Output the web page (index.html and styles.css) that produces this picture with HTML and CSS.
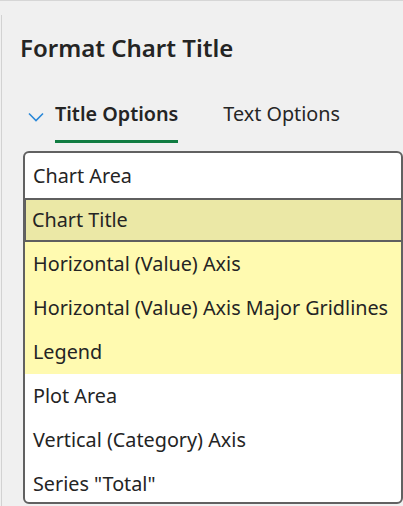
FILE: index.html
```html
<!DOCTYPE html>
<html>
<head>
<meta charset="utf-8">
<link rel="stylesheet" href="styles.css">
</head>
<body>
<div class="frame">
  <div class="pane">
    <h1 class="title">Format Chart Title</h1>
    <div class="tabs">
      <svg class="chev" width="16" height="10" viewBox="0 0 16 10"><polyline points="1,1.5 8,8.5 15,1.5" fill="none" stroke="#2b88d8" stroke-width="1.6"/></svg>
      <div class="tab active">Title Options</div>
      <div class="tab">Text Options</div>
    </div>
    <div class="dropdown">
      <div class="row">Chart Area</div>
      <div class="row selected">Chart Title</div>
      <div class="row hl">Horizontal (Value) Axis</div>
      <div class="row hl">Horizontal (Value) Axis Major Gridlines</div>
      <div class="row hl">Legend</div>
      <div class="row">Plot Area</div>
      <div class="row">Vertical (Category) Axis</div>
      <div class="row">Series "Total"</div>
    </div>
  </div>
</div>
</body>
</html>
```
FILE: styles.css
```css
html, body {
  margin: 0;
  padding: 0;
  background: #f0f0f0;
}
body {
  width: 403px;
  height: 506px;
  overflow: hidden;
  font-family: "Noto Sans", "Open Sans", sans-serif;
  color: #242424;
}
.frame {
  border-top: 1px solid #d6d6d6;
  height: 505px;
}
.pane {
  margin: 14px 0 0 1px;
  border-left: 1px solid #d2d2d2;
  padding-left: 18px;
  height: 491px;
}
.title {
  margin: 0;
  padding-top: 17px;
  font-size: 24px;
  line-height: 31px;
  font-weight: 600;
  color: #242424;
}
.tabs {
  display: flex;
  align-items: flex-start;
  margin: 38px 0 0 8px;
}
.chev {
  margin: 11px 11px 0 0;
  flex: none;
}
.tab {
  font-size: 19.8px;
  line-height: 26px;
  padding-bottom: 13px;
  border-bottom: 3px solid transparent;
  color: #262626;
  margin-right: 45px;
}
.tab.active {
  font-weight: 600;
  border-bottom-color: #107c41;
  color: #242424;
}
.dropdown {
  margin: 8px 0 0 3px;
  width: 380px;
  height: 353px;
  box-sizing: border-box;
  border: 2px solid #616161;
  border-radius: 6px;
  background: #ffffff;
  overflow: hidden;
  padding-top: 1px;
}
.row {
  height: 44px;
  line-height: 44px;
  padding-left: 8px;
  font-size: 19.8px;
  color: #242424;
  white-space: nowrap;
}
.row.selected {
  box-sizing: border-box;
  border: 2px solid #5f5f5f;
  border-right: none;
  line-height: 40px;
  padding-left: 6px;
  background: #ebe8a6;
  margin-left: -1px;
}
.row.hl {
  background: #fffab0;
}
```
